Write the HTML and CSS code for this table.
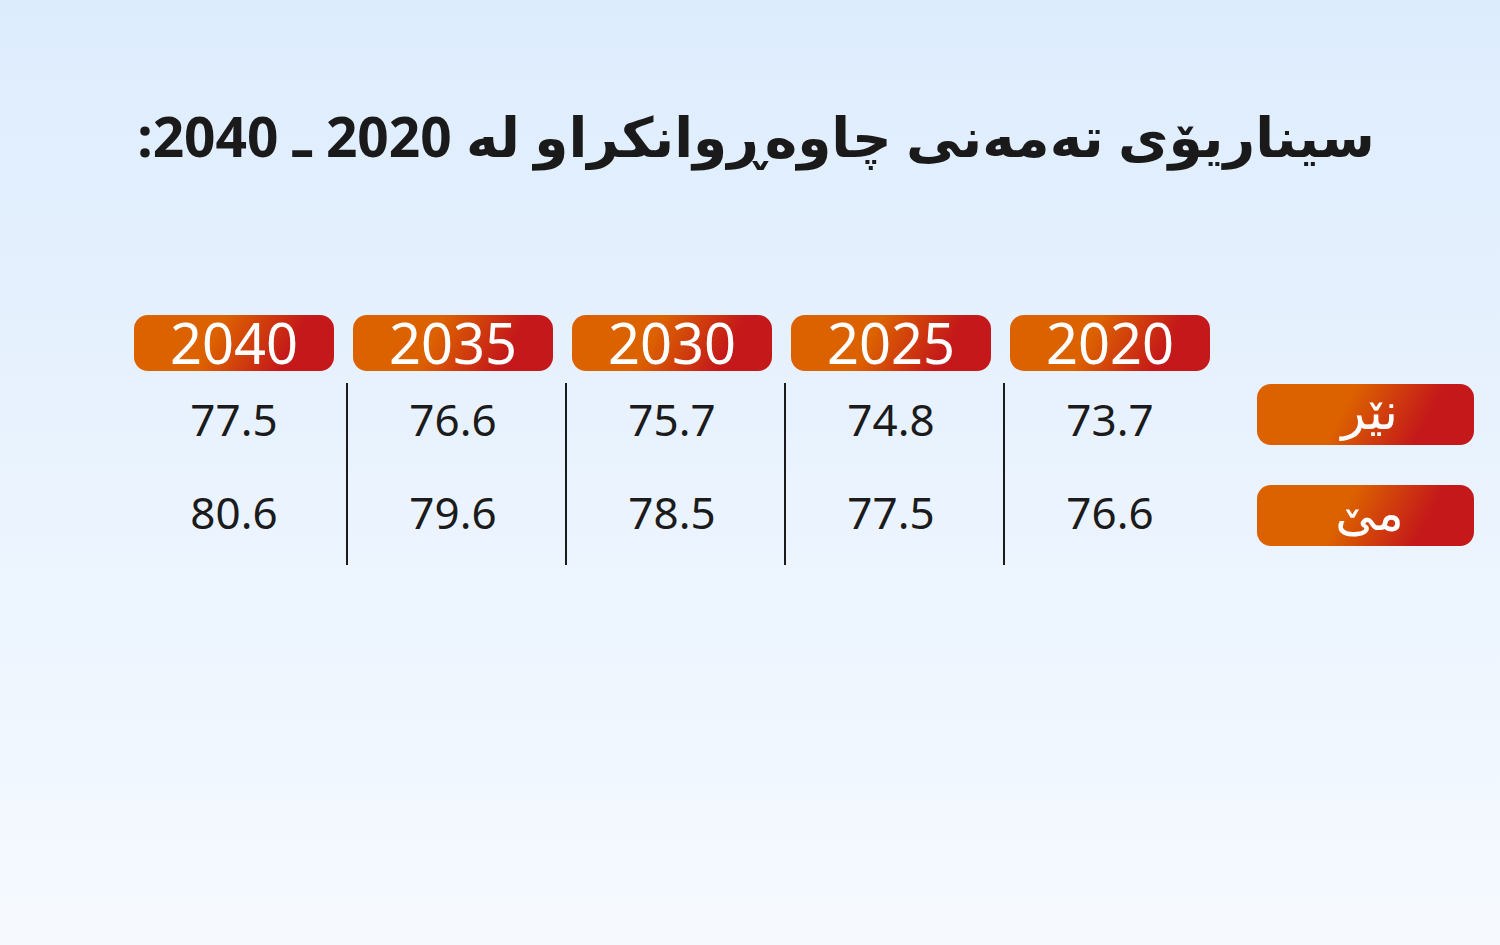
FILE: index.html
```html
<!DOCTYPE html>
<html lang="ckb" dir="rtl">
<head>
  <meta charset="UTF-8">
  <title>سیناریۆی تەمەنی چاوەڕوانکراو</title>
  <link rel="stylesheet" href="styles.css">
</head>
<body>
  <h1 class="title">سیناریۆی تەمەنی چاوەڕوانکراو لە 2020 ـ 2040:</h1>

  <div class="table">
    <div class="corner"></div>
    <div class="year">2020</div>
    <div class="year">2025</div>
    <div class="year">2030</div>
    <div class="year">2035</div>
    <div class="year">2040</div>

    <div class="labels">
      <div class="label">نێر</div>
      <div class="label">مێ</div>
    </div>
    <div class="col divided"><div class="val">73.7</div><div class="val">76.6</div></div>
    <div class="col divided"><div class="val">74.8</div><div class="val">77.5</div></div>
    <div class="col divided"><div class="val">75.7</div><div class="val">78.5</div></div>
    <div class="col divided"><div class="val">76.6</div><div class="val">79.6</div></div>
    <div class="col"><div class="val">77.5</div><div class="val">80.6</div></div>
  </div>
</body>
</html>
```

FILE: styles.css
```css
:root {
  --orange: #dc6200;
  --red: #c4181a;
  --ink: #1b1b1b;
}

html, body {
  height: 100%;
}

body {
  margin: 0;
  font-family: 'Noto Sans', 'DejaVu Sans', sans-serif;
  color: var(--ink);
  background: linear-gradient(180deg, #ddecfd 0%, #f6faff 100%);
  overflow: hidden;
}

.title {
  margin: 0;
  padding-top: 98px;
  height: 76px;
  text-align: center;
  font-size: 55px;
  font-weight: bold;
  line-height: 76px;
  color: #1a1a1a;
  padding-left: 12px;
}

.table {
  direction: rtl;
  display: grid;
  grid-template-columns: 245px repeat(5, 200px);
  column-gap: 19px;
  margin-top: 141px;
  padding-right: 26px;
  justify-content: start;
}

.year,
.label {
  color: #fff;
  background: linear-gradient(118deg, var(--orange) 40%, var(--red) 76%);
  border-radius: 14px;
  text-align: center;
}

.year {
  height: 56px;
  line-height: 54px;
  font-size: 56px;
  direction: ltr;
}

.labels {
  display: flex;
  flex-direction: column;
  gap: 40px;
  padding-top: 13px;
}

.label {
  width: 217px;
  height: 61px;
  line-height: 52px;
  font-size: 50px;
  padding-left: 8px;
  box-sizing: border-box;
}

.col {
  margin-top: 12px;
  height: 182px;
  box-sizing: border-box;
  padding-top: 14px;
  display: flex;
  flex-direction: column;
  gap: 49px;
}

.col.divided {
  border-left: 2px solid var(--ink);
  margin-left: -7px;
  padding-left: 5px;
}

.val {
  direction: ltr;
  text-align: center;
  font-size: 44px;
  line-height: 44px;
}
```
